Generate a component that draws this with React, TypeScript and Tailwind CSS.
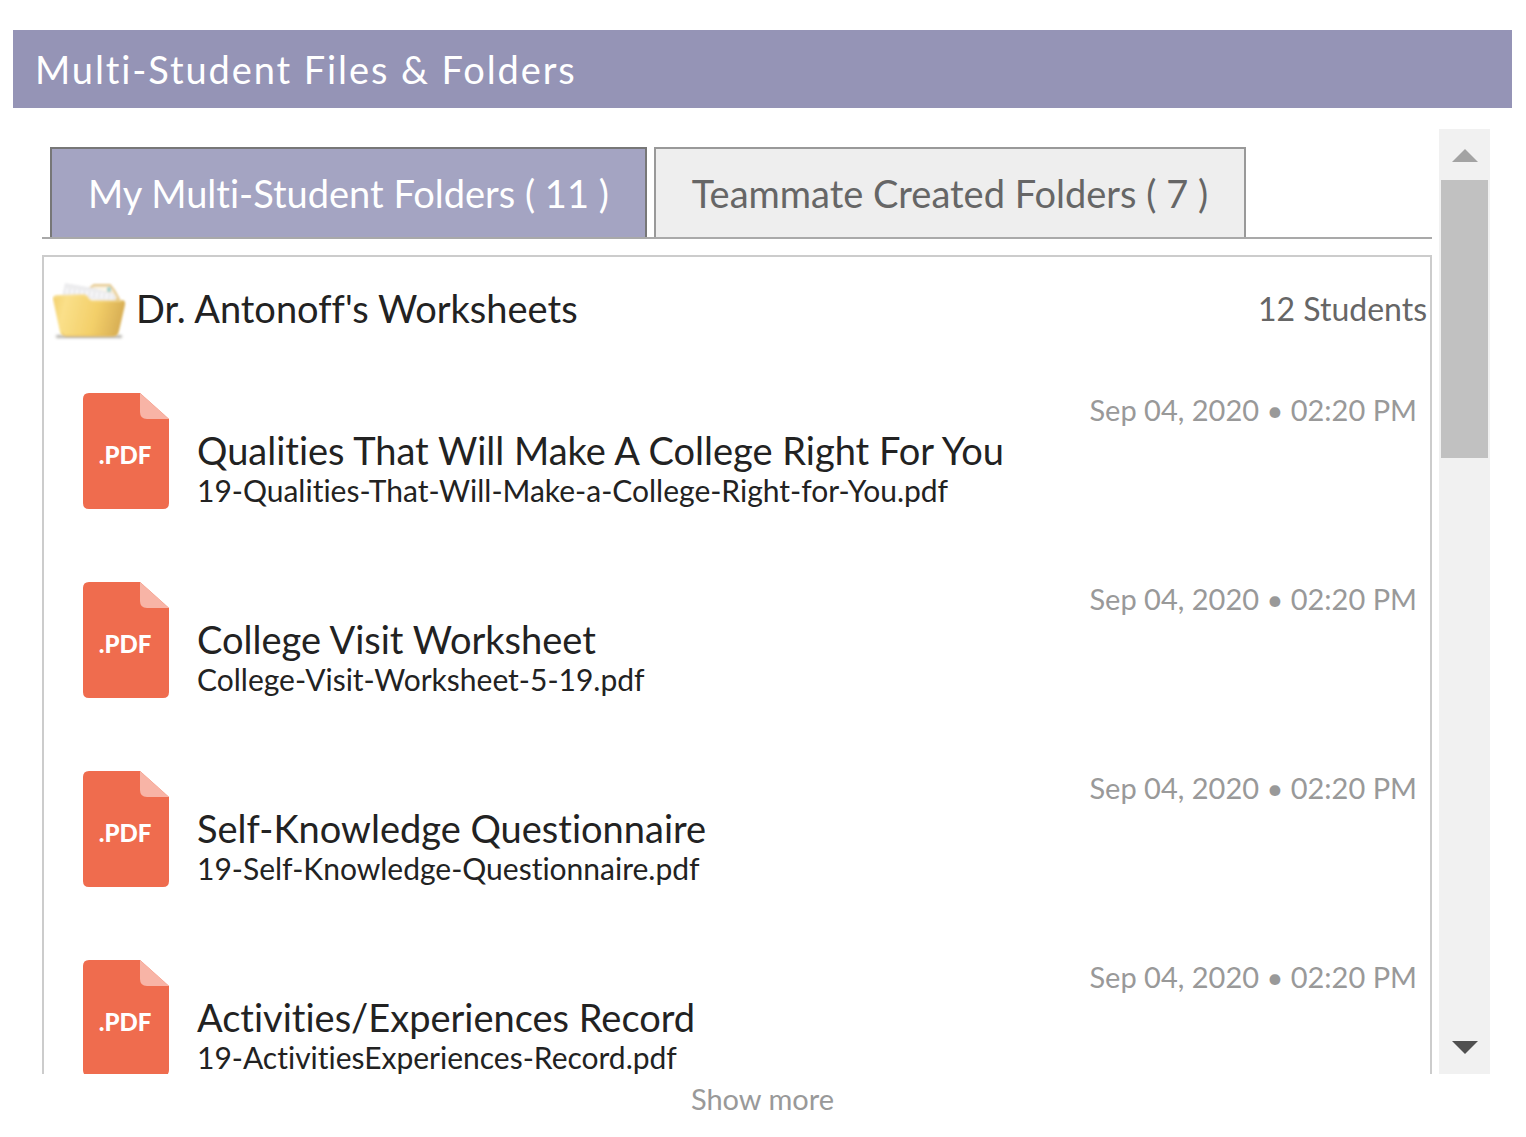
const files = [
  { title: "Qualities That Will Make A College Right For You", name: "19-Qualities-That-Will-Make-a-College-Right-for-You.pdf" },
  { title: "College Visit Worksheet", name: "College-Visit-Worksheet-5-19.pdf" },
  { title: "Self-Knowledge Questionnaire", name: "19-Self-Knowledge-Questionnaire.pdf" },
  { title: "Activities/Experiences Record", name: "19-ActivitiesExperiences-Record.pdf" },
];

function FolderIcon() {
  return (
    <svg width="76" height="60" viewBox="0 0 76 60" className="shrink-0" aria-hidden="true">
      <defs>
        <linearGradient id="folder-front" x1="0" y1="0" x2="1" y2="0.15">
          <stop offset="0" stopColor="#f3d06e" />
          <stop offset="0.2" stopColor="#fae08a" />
          <stop offset="0.65" stopColor="#f3cf69" />
          <stop offset="1" stopColor="#d9b056" />
        </linearGradient>
        <filter id="folder-shadow" x="-10%" y="-100%" width="120%" height="300%">
          <feGaussianBlur stdDeviation="1.5" />
        </filter>
        <filter id="folder-soft">
          <feGaussianBlur stdDeviation="0.9" />
        </filter>
      </defs>
      <rect x="4" y="54" width="66" height="3" rx="1" fill="#b5b2ac" filter="url(#folder-shadow)" />
      <g filter="url(#folder-soft)">
        <path d="M38 7 L42 4 H58 L62 9 L67 18 L60 20 L40 10 Z" fill="#f6ead0" stroke="#e6c98d" strokeWidth="2" />
        <path d="M44 7 H57 L60 11 L44 9 Z" fill="#fbf7ec" />
        <rect x="55" y="6" width="4" height="5" fill="#a9d3cd" />
        <path d="M13 2 L41 7 L62 13 L64 20 L10 16 Z" fill="#ececee" />
        <path d="M14 10 L60 16" stroke="#f8f8fa" strokeWidth="6" strokeDasharray="2 3" />
        <path d="M1 18 Q1 14 6 14 L31 13 Q35 13 37 17 Q38 19 42 19 L69 19 Q74 19 73 24 L67 50 Q66 55 61 55 L14 55 Q9 55 8 51 Z" fill="url(#folder-front)" />
        <path d="M3 17 Q3 15 6 15 L31 14 Q35 14 37 18 Q38 20 42 20 L70 20" fill="none" stroke="#fae7a8" strokeWidth="1" />
        <path d="M10 52 Q11 55 14 55 L61 55 Q65 55 66 52" fill="none" stroke="#dfb04a" strokeWidth="1" />
      </g>
    </svg>
  );
}

function PdfIcon() {
  return (
    <svg width="86" height="116" viewBox="0 0 86 116" className="shrink-0" role="img" aria-label="PDF file">
      <path d="M6 0 H57 L86 26 V110 Q86 116 80 116 H6 Q0 116 0 110 V6 Q0 0 6 0 Z" fill="#ef6c4e" />
      <path d="M57 0 L86 26 H64 Q57 26 57 19 Z" fill="#f8b4a6" />
      <text x="42" y="71" textAnchor="middle" fill="#fff" fontFamily="Lato, sans-serif" fontSize="24" fontWeight="900">.PDF</text>
    </svg>
  );
}

function Scrollbar() {
  return (
    <div className="w-[51px] shrink-0 flex flex-col bg-[#f1f1f1] px-[2px]">
      <button aria-label="Scroll up" className="h-[51px] shrink-0 flex items-center justify-center">
        <svg width="26" height="13" viewBox="0 0 26 13" className="mt-[2px]">
          <path d="M13 0 L26 13 H0 Z" fill="#a3a3a3" />
        </svg>
      </button>
      <div className="flex-1">
        <div className="h-[33%] bg-[#c1c1c1]" />
      </div>
      <button aria-label="Scroll down" className="h-[51px] shrink-0 flex items-center justify-center">
        <svg width="26" height="13" viewBox="0 0 26 13" className="mb-[2px]">
          <path d="M0 0 H26 L13 13 Z" fill="#505050" />
        </svg>
      </button>
    </div>
  );
}

export default function App() {
  return (
    <div className="h-screen flex flex-col bg-white pt-[30px] pl-[13px] pr-[14px] font-['Lato',sans-serif] [font-variant-ligatures:none] text-[#222]">
      <header className="h-[78px] shrink-0 flex items-center bg-[#9594b6] px-[22px]">
        <h1 className="text-[38px] leading-[48px] tracking-wider text-white">Multi-Student Files &amp; Folders</h1>
      </header>

      <main className="flex-1 min-h-0 flex gap-[7px] mt-[21px] ml-[29px] mr-[22px]">
        <div className="flex-1 min-w-0 overflow-hidden pt-[18px]">
          {/* Tabs */}
          <div role="tablist" className="flex gap-[7px] pl-2 border-b-2 border-[#a9a9a9]">
            <button role="tab" aria-selected="true" className="h-[90px] px-9 border-2 border-b-0 border-[#777] bg-[#a4a4c2] text-[38px] leading-[48px] text-white">
              My Multi-Student Folders ( 11 )
            </button>
            <button role="tab" aria-selected="false" className="h-[90px] px-9 border-2 border-b-0 border-[#999] bg-[#eee] text-[38px] leading-[48px] text-[#666]">
              Teammate Created Folders ( 7 )
            </button>
          </div>

          {/* Folder */}
          <section className="mt-4 border-2 border-[#ccc]">
            <div className="flex items-start pt-6 pl-2 pr-[3px]">
              <FolderIcon />
              <h2 className="ml-2 text-[38px] leading-[54px]">Dr. Antonoff's Worksheets</h2>
              <span className="ml-auto text-[32px] leading-[56px] text-[#666]">12 Students</span>
            </div>
            <ul className="pt-[52px] pl-[39px] pr-[13px]">
              {files.map((file) => (
                <li key={file.name} className="h-[189px] flex">
                  <PdfIcon />
                  <div className="flex-1 min-w-0 ml-7">
                    <p className="text-right text-[29px] leading-[34px] text-[#999]">Sep 04, 2020 • 02:20 PM</p>
                    <a href="#" className="block text-[38px] leading-[46px]">{file.title}</a>
                    <p className="text-[30px] leading-[34px]">{file.name}</p>
                  </div>
                </li>
              ))}
            </ul>
          </section>
        </div>
        <Scrollbar />
      </main>

      <footer className="h-[63px] shrink-0 flex justify-center items-start pt-2">
        <button className="text-[29px] leading-[34px] text-[#999]">Show more</button>
      </footer>
    </div>
  );
}
